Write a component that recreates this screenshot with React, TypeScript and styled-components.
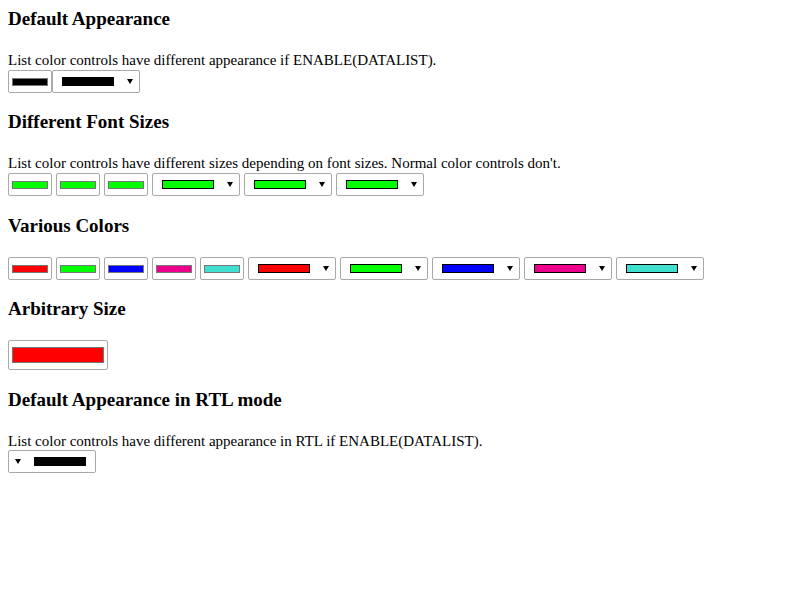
import React from "react";
import styled, { createGlobalStyle } from "styled-components";

const Global = createGlobalStyle`
  html, body { margin: 0; padding: 0; background: #fff; }
  body { font-family: "Liberation Serif", "Times New Roman", serif; color: #000; }
`;

const Page = styled.div`
  padding: 8px;
  display: flex;
  flex-direction: column;
`;

const Section = styled.section<{ $first?: boolean }>`
  display: flex;
  flex-direction: column;
  margin-top: ${(p) => (p.$first ? "0" : "18px")};
`;

const Heading = styled.h3<{ $shift?: number }>`
  margin: ${(p) => p.$shift ?? 0}px 0 20px 0;
  font-size: 19px;
  font-weight: bold;
  line-height: 22px;
`;

const Text = styled.div`
  font-size: 15px;
  line-height: 17px;
  margin-top: 2px;
`;

const Row = styled.div<{ $gap: number; $top: number }>`
  display: flex;
  align-items: center;
  gap: ${(p) => p.$gap}px;
  margin-top: ${(p) => p.$top}px;
`;

const Well = styled.div<{ $w: number; $h: number }>`
  box-sizing: border-box;
  width: ${(p) => p.$w}px;
  height: ${(p) => p.$h}px;
  border: 1px solid #a9a9a9;
  border-radius: 2px;
  background: #fff;
  display: flex;
  align-items: center;
  padding: 0 3px;
`;

const Swatch = styled.div<{ $h: number }>`
  box-sizing: border-box;
  flex: 1;
  height: ${(p) => p.$h}px;
  border: 1px solid #777;
`;

const ListWell = styled.div<{ $rtl?: boolean }>`
  box-sizing: border-box;
  width: 88px;
  height: 23px;
  border: 1px solid #a9a9a9;
  border-radius: 2px;
  background: #fff;
  display: flex;
  align-items: center;
  flex-direction: ${(p) => (p.$rtl ? "row-reverse" : "row")};
  justify-content: space-between;
  padding: ${(p) => (p.$rtl ? "0 9px 0 6px" : "0 6px 0 9px")};
`;

const ListSwatch = styled.div`
  box-sizing: border-box;
  width: 52px;
  height: 9px;
  border: 1px solid #000;
`;

const Arrow = styled.div`
  width: 0;
  height: 0;
  border-left: 3px solid transparent;
  border-right: 3px solid transparent;
  border-top: 5px solid #000;
`;

const ColorInput: React.FC<{ color: string; w?: number; h?: number; sh?: number }> = ({
  color,
  w = 44,
  h = 23,
  sh = 8,
}) => (
  <Well $w={w} $h={h}>
    <Swatch $h={sh} style={{ background: color }} />
  </Well>
);

const ListInput: React.FC<{ color: string; rtl?: boolean }> = ({ color, rtl }) => (
  <ListWell $rtl={rtl}>
    <ListSwatch style={{ background: color }} />
    <Arrow />
  </ListWell>
);

const colors = ["#ff0000", "#00ff00", "#0000ff", "#ec008c", "#40e0d0"];

export default function App() {
  return (
    <>
      <Global />
      <Page>
        <Section $first>
          <Heading>Default Appearance</Heading>
          <Text>List color controls have different appearance if ENABLE(DATALIST).</Text>
          <Row $gap={0} $top={1}>
            <ColorInput color="#000000" />
            <ListInput color="#000000" />
          </Row>
        </Section>
        <Section>
          <Heading>Different Font Sizes</Heading>
          <Text>
            List color controls have different sizes depending on font sizes. Normal color
            controls don't.
          </Text>
          <Row $gap={4} $top={1}>
            <ColorInput color="#00ff00" />
            <ColorInput color="#00ff00" />
            <ColorInput color="#00ff00" />
            <ListInput color="#00ff00" />
            <ListInput color="#00ff00" />
            <ListInput color="#00ff00" />
          </Row>
        </Section>
        <Section>
          <Heading $shift={1}>Various Colors</Heading>
          <Row $gap={4} $top={0}>
            {colors.map((c) => (
              <ColorInput key={"n" + c} color={c} />
            ))}
            {colors.map((c) => (
              <ListInput key={"l" + c} color={c} />
            ))}
          </Row>
        </Section>
        <Section>
          <Heading>Arbitrary Size</Heading>
          <Row $gap={4} $top={0}>
            <ColorInput color="#ff0000" w={100} h={30} sh={16} />
          </Row>
        </Section>
        <Section>
          <Heading $shift={1}>Default Appearance in RTL mode</Heading>
          <Text>List color controls have different appearance in RTL if ENABLE(DATALIST).</Text>
          <Row $gap={0} $top={0}>
            <ListInput color="#000000" rtl />
          </Row>
        </Section>
      </Page>
    </>
  );
}
